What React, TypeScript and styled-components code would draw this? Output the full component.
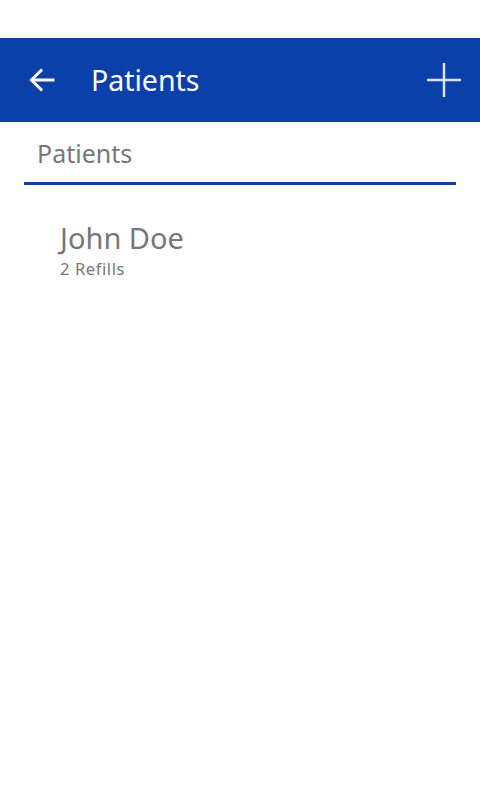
import React from 'react';
import styled, { createGlobalStyle } from 'styled-components';

const GlobalStyle = createGlobalStyle`
  html, body {
    margin: 0;
    padding: 0;
    background: #fff;
    font-family: "Noto Sans", "Open Sans", sans-serif;
  }
`;

const Screen = styled.div`
  width: 480px;
  min-height: 800px;
  background: #fff;
  padding-top: 38px;
  box-sizing: border-box;
`;

const Toolbar = styled.header`
  height: 84px;
  background: #0b3faa;
  display: flex;
  align-items: center;
  padding: 0 18px 0 28px;
`;

const IconButton = styled.button`
  background: none;
  border: none;
  padding: 0;
  display: flex;
  align-items: center;
  justify-content: center;
  cursor: pointer;
`;

const Title = styled.h1`
  flex: 1;
  margin: 0 0 0 35px;
  color: #fff;
  font-size: 28.5px;
  font-weight: 400;
  line-height: 1;
`;

const Section = styled.div`
  margin: 0 24px;
  padding: 14px 13px 12px;
  border-bottom: 3px solid #0b3faa;
  color: #777;
  font-size: 25px;
  line-height: 34px;
`;

const List = styled.ul`
  list-style: none;
  margin: 0;
  padding: 35px 0 0 60px;
`;

const Item = styled.li`
  display: flex;
  flex-direction: column;
  color: #777;
`;

const Name = styled.span`
  font-size: 29px;
  line-height: 36px;
`;

const Sub = styled.span`
  margin-top: 3px;
  font-size: 16.5px;
  line-height: 20px;
  letter-spacing: 0.6px;
`;

export default function App() {
  return (
    <>
      <GlobalStyle />
      <Screen>
        <Toolbar>
          <IconButton aria-label="Back">
            <svg width="28" height="28" viewBox="0 0 28 28" fill="none" stroke="#fff" strokeWidth="3" strokeLinecap="square">
              <path d="M4 14h21" />
              <path d="M13 4.5L3.5 14 13 23.5" />
            </svg>
          </IconButton>
          <Title>Patients</Title>
          <IconButton aria-label="Add">
            <svg width="36" height="36" viewBox="0 0 36 36" fill="none" stroke="#dde3f2" strokeWidth="2.5">
              <path d="M18 1v34" />
              <path d="M1 18h34" />
            </svg>
          </IconButton>
        </Toolbar>
        <Section>Patients</Section>
        <List>
          <Item>
            <Name>John Doe</Name>
            <Sub>2 Refills</Sub>
          </Item>
        </List>
      </Screen>
    </>
  );
}
